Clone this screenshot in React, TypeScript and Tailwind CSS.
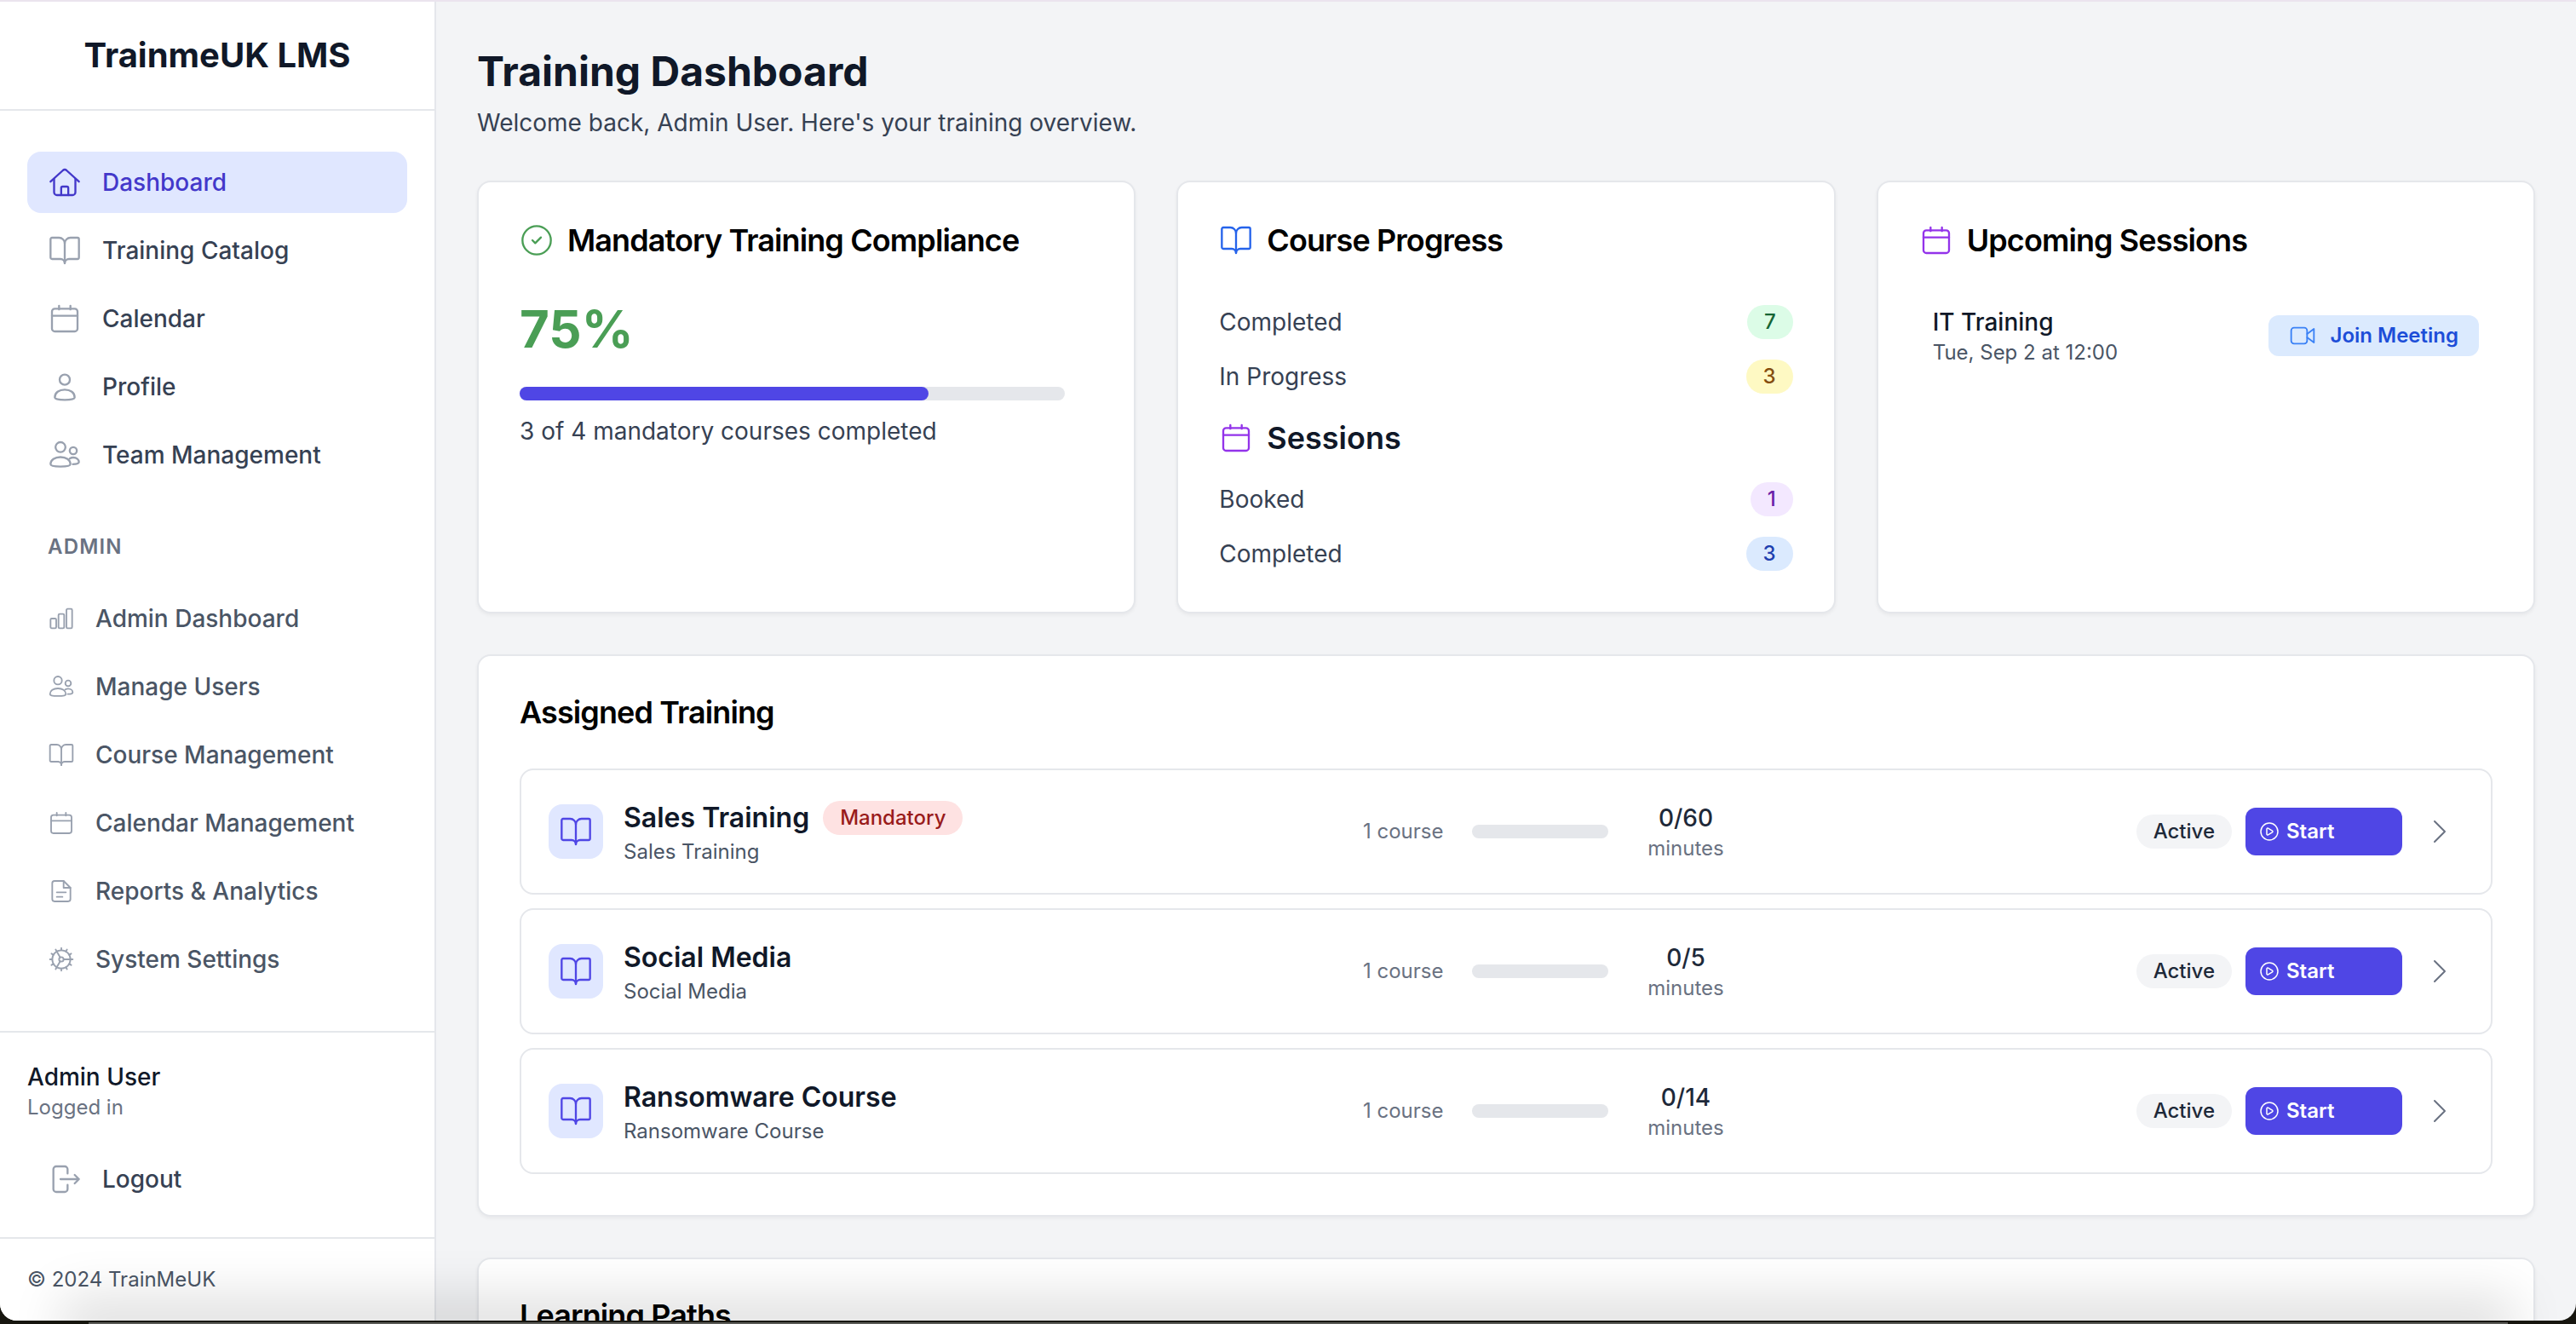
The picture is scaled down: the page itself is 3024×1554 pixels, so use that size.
import type { ReactNode } from 'react';
import { BookOpen, ChevronRight, CircleCheck, CirclePlay, Cog } from 'lucide-react';

interface IconProps {
  className?: string;
  strokeWidth?: number;
}

function Svg({ className, strokeWidth = 1.4, children }: IconProps & { children: ReactNode }) {
  return (
    <svg
      viewBox="0 0 24 24"
      fill="none"
      stroke="currentColor"
      strokeWidth={strokeWidth}
      strokeLinecap="round"
      strokeLinejoin="round"
      className={className}
    >
      {children}
    </svg>
  );
}

function HouseIcon(props: IconProps) {
  return (
    <Svg {...props}>
      <path d="M2 11.5 10.7 3.6a2 2 0 0 1 2.6 0L22 11.5" />
      <path d="M4.5 9.5V19a2 2 0 0 0 2 2h11a2 2 0 0 0 2-2V9.5" />
      <path d="M9.5 21v-5a1 1 0 0 1 1-1h3a1 1 0 0 1 1 1v5" />
    </Svg>
  );
}

function CalendarIcon(props: IconProps) {
  return (
    <Svg {...props}>
      <rect x="3" y="5" width="18" height="16" rx="2" />
      <path d="M3 10h18M8 3v2.5M16 3v2.5" />
    </Svg>
  );
}

function PersonIcon(props: IconProps) {
  return (
    <Svg {...props}>
      <circle cx="12" cy="7" r="3.6" />
      <path d="M5 19.5c0-3.4 3-5.5 7-5.5s7 2.1 7 5.5c0 1-3 1.7-7 1.7s-7-.7-7-1.7z" />
    </Svg>
  );
}

function UsersIcon(props: IconProps) {
  return (
    <Svg {...props}>
      <circle cx="9" cy="6.5" r="3.5" />
      <circle cx="18" cy="9" r="2.5" />
      <path d="M2 18.5c0-3 3-5 7-5s7 2 7 5c0 1.200-3.200 1.700-7 1.700s-7-.5-7-1.700z" />
      <path d="M15.500 14.500c.8-.5 1.600-.7 2.500-.7 2.400 0 4 1.500 4 3.200 0 1-1.700 1.500-4.300 1.500" />
    </Svg>
  );
}

function BarsIcon(props: IconProps) {
  return (
    <Svg {...props}>
      <rect x="2.500" y="12" width="5" height="8.500" rx="1" />
      <rect x="9.500" y="8" width="5" height="12.500" rx="1" />
      <rect x="16.500" y="3.500" width="5" height="17" rx="1" />
    </Svg>
  );
}

function ReportIcon(props: IconProps) {
  return (
    <Svg {...props}>
      <path d="M14 3H6a2 2 0 0 0-2 2v14a2 2 0 0 0 2 2h12a2 2 0 0 0 2-2V9z" />
      <path d="M14 3v6h6M8 13h8M8 17h5" />
    </Svg>
  );
}

function LogoutIcon(props: IconProps) {
  return (
    <Svg {...props}>
      <path d="M14 8V5a2 2 0 0 0-2-2H6a2 2 0 0 0-2 2v14a2 2 0 0 0 2 2h6a2 2 0 0 0 2-2v-3" />
      <path d="M9 12h13M19 9l3 3-3 3" />
    </Svg>
  );
}

function VideoIcon(props: IconProps) {
  return (
    <Svg {...props}>
      <rect x="2" y="5" width="14" height="14" rx="2.500" />
      <path d="M16 10.500 22 6v12l-6-4.500" />
    </Svg>
  );
}

const mainNav = [
  { label: 'Dashboard', icon: HouseIcon, active: true },
  { label: 'Training Catalog', icon: BookOpen },
  { label: 'Calendar', icon: CalendarIcon },
  { label: 'Profile', icon: PersonIcon },
  { label: 'Team Management', icon: UsersIcon },
];

const adminNav = [
  { label: 'Admin Dashboard', icon: BarsIcon },
  { label: 'Manage Users', icon: UsersIcon },
  { label: 'Course Management', icon: BookOpen },
  { label: 'Calendar Management', icon: CalendarIcon },
  { label: 'Reports & Analytics', icon: ReportIcon },
  { label: 'System Settings', icon: Cog },
];

const assigned = [
  { title: 'Sales Training', minutes: '0/60', mandatory: true },
  { title: 'Social Media', minutes: '0/5' },
  { title: 'Ransomware Course', minutes: '0/14' },
];

function Sidebar() {
  return (
    <aside className="flex w-64 shrink-0 flex-col border-r border-gray-200 bg-white">
      <div className="flex h-16 shrink-0 items-center justify-center border-b border-gray-200">
        <h1 className="text-xl font-bold text-gray-900">TrainmeUK LMS</h1>
      </div>

      <nav className="flex-1 px-4 pt-6">
        <div className="space-y-1">
          {mainNav.map((item) => (
            <a
              key={item.label}
              className={`flex h-9 items-center rounded-lg px-3 text-sm font-medium ${
                item.active ? 'bg-[#e0e7ff] text-[#4338ca]' : 'text-gray-700'
              }`}
            >
              <item.icon
                strokeWidth={1.4}
                className={`mr-3 h-5 w-5 ${item.active ? 'text-[#4338ca]' : 'text-gray-400'}`}
              />
              {item.label}
            </a>
          ))}
        </div>

        <div className="px-3 pt-[28px] pb-4 text-xs font-semibold tracking-wider text-gray-500 uppercase">Admin</div>
        <div className="space-y-1">
          {adminNav.map((item) => (
            <a key={item.label} className="flex h-9 items-center rounded-lg px-3 text-sm font-medium text-gray-600">
              <item.icon strokeWidth={1.4} className="mr-3 h-4 w-4 text-gray-400" />
              {item.label}
            </a>
          ))}
        </div>
      </nav>

      <div className="border-t border-gray-200 p-4">
        <p className="text-sm font-medium text-gray-900">Admin User</p>
        <p className="text-xs text-gray-500">Logged in</p>
        <a className="mt-4 flex h-9 items-center rounded-lg px-3 text-sm font-medium text-gray-700">
          <LogoutIcon className="mr-3 h-5 w-5 text-gray-400" />
          Logout
        </a>
      </div>

      <div className="border-t border-gray-200 p-4 text-xs text-gray-600">© 2024 TrainMeUK</div>
    </aside>
  );
}

function Card({ className = '', children }: { className?: string; children: ReactNode }) {
  return <section className={`rounded-lg border border-gray-200 bg-white p-6 shadow-xs ${className}`}>{children}</section>;
}

function CardTitle({ icon, children }: { icon?: ReactNode; children: ReactNode }) {
  return (
    <h3 className="flex items-center gap-2 text-lg leading-5 font-semibold tracking-tight text-black">
      {icon}
      {children}
    </h3>
  );
}

function StatRow({ label, value, badge }: { label: string; value: number; badge: string }) {
  return (
    <div className="flex h-5 items-center justify-between text-sm text-gray-700">
      <span>{label}</span>
      <span className={`rounded-full px-2.5 text-xs leading-5 font-medium ${badge}`}>{value}</span>
    </div>
  );
}

function TrainingRow({ title, minutes, mandatory }: { title: string; minutes: string; mandatory?: boolean }) {
  return (
    <div className="flex items-center rounded-lg border border-gray-200 bg-white p-4">
      <div className="flex w-[478px] items-center gap-3">
        <div className="flex h-8 w-8 items-center justify-center rounded-lg bg-[#e0e7ff]">
          <BookOpen strokeWidth={1.4} className="h-5 w-5 text-[#4f46e5]" />
        </div>
        <div>
          <div className="flex items-center gap-2">
            <span className="text-base font-semibold text-gray-900">{title}</span>
            {mandatory && (
              <span className="rounded-full bg-[#fee2e2] px-2.5 text-xs leading-5 font-medium text-[#991b1b]">Mandatory</span>
            )}
          </div>
          <p className="text-xs text-gray-600">{title}</p>
        </div>
      </div>

      <div className="flex items-center">
        <span className="w-12 text-xs whitespace-nowrap text-gray-500">1 course</span>
        <div className="ml-4 h-2 w-20 rounded-full bg-gray-200" />
        <div className="w-[91px] text-center">
          <p className="text-sm font-medium text-gray-800">{minutes}</p>
          <p className="text-xs text-gray-500">minutes</p>
        </div>
      </div>

      <div className="ml-auto flex items-center">
        <span className="rounded-full bg-gray-100 px-2.5 text-xs leading-5 font-medium text-gray-800">Active</span>
        <button className="ml-2 flex h-7 w-[92px] items-center gap-1 rounded-md bg-[#4f46e5] px-2 text-xs font-semibold text-white">
          <CirclePlay strokeWidth={1.5} className="h-3 w-3" />
          Start
        </button>
        <ChevronRight strokeWidth={1} className="mr-0.5 ml-2.5 h-6 w-6 text-gray-500" />
      </div>
    </div>
  );
}

export default function App() {
  return (
    <div className="relative h-[777px] w-[1512px] overflow-hidden bg-[#17160f] font-['Inter',sans-serif] [zoom:2]">
      <div className="relative flex h-[775px] flex-col overflow-hidden rounded-b-[10px] bg-gray-100">
        <div className="h-px shrink-0 bg-[#ebe4ee]" />
        <div className="flex min-h-0 flex-1">
          <Sidebar />

          <main className="min-w-0 flex-1 overflow-hidden px-6 pt-[25px]">
            <h2 className="text-2xl font-bold text-gray-900">Training Dashboard</h2>
            <p className="mt-1 mb-6 text-sm text-gray-700">Welcome back, Admin User. Here's your training overview.</p>

            <div className="grid grid-cols-3 gap-6">
              <Card>
                <CardTitle icon={<CircleCheck strokeWidth={1.4} className="h-5 w-5 text-[#4a9e55]" />}>
                  Mandatory Training Compliance
                </CardTitle>
                <p className="mt-6 text-3xl font-bold text-[#4a9e55]">75%</p>
                <div className="mt-4 h-2 w-80 rounded-full bg-gray-200">
                  <div className="h-2 w-60 rounded-full bg-[#4f46e5]" />
                </div>
                <p className="mt-2 text-sm text-gray-700">3 of 4 mandatory courses completed</p>
              </Card>

              <Card>
                <CardTitle icon={<BookOpen strokeWidth={1.4} className="h-5 w-5 text-[#2563eb]" />}>Course Progress</CardTitle>
                <div className="mt-7 space-y-3">
                  <StatRow label="Completed" value={7} badge="bg-[#dcfce7] text-[#166534]" />
                  <StatRow label="In Progress" value={3} badge="bg-[#fef9c3] text-[#854d0e]" />
                </div>
                <div className="my-4">
                  <CardTitle icon={<CalendarIcon className="h-5 w-5 text-[#9333ea]" />}>
                    <span className="tracking-normal text-gray-900">Sessions</span>
                  </CardTitle>
                </div>
                <div className="space-y-3">
                  <StatRow label="Booked" value={1} badge="bg-[#f3e8ff] text-[#6b21a8]" />
                  <StatRow label="Completed" value={3} badge="bg-[#dbeafe] text-[#1e40af]" />
                </div>
              </Card>

              <Card>
                <CardTitle icon={<CalendarIcon className="h-5 w-5 text-[#9333ea]" />}>Upcoming Sessions</CardTitle>
                <div className="mt-7 flex items-center justify-between px-2">
                  <div>
                    <p className="text-sm font-medium text-gray-900">IT Training</p>
                    <p className="text-xs text-gray-600">Tue, Sep 2 at 12:00</p>
                  </div>
                  <button className="flex h-6 items-center rounded-md bg-[#dbeafe] px-3 text-xs font-semibold text-[#1d4ed8]">
                    <VideoIcon className="mr-2 h-4 w-4 text-[#3b82f6]" />
                    Join Meeting
                  </button>
                </div>
              </Card>
            </div>

            <Card className="mt-6">
              <div className="-mt-px mb-[23px]">
                <CardTitle>Assigned Training</CardTitle>
              </div>
              <div className="space-y-2">
                {assigned.map((course) => (
                  <TrainingRow key={course.title} {...course} />
                ))}
              </div>
            </Card>

            <Card className="mt-6">
              <div className="-mt-px">
                <CardTitle>Learning Paths</CardTitle>
              </div>
            </Card>
          </main>
        </div>

        {/* shadow of the dock bleeding over the window's bottom edge */}
        <div className="pointer-events-none absolute right-[50px] -bottom-1 left-[50px] h-1 shadow-[0_0_30px_14px_rgba(0,0,0,0.13)]" />
      </div>
      <div className="absolute right-[40px] bottom-0 left-[52px] h-px bg-[#5a5a56]" />
    </div>
  );
}
